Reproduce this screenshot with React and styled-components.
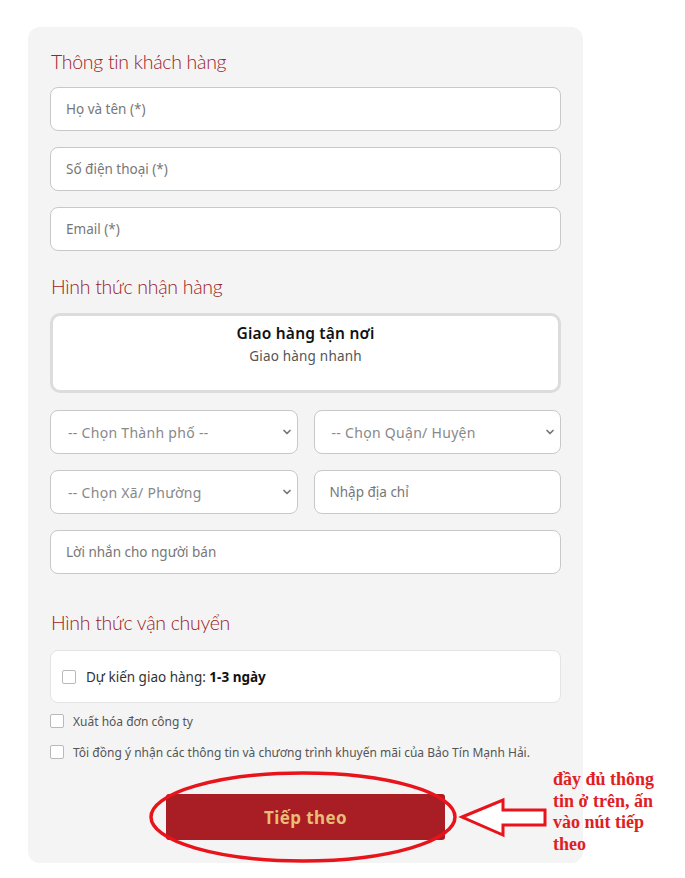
import styled, { createGlobalStyle } from 'styled-components';

const GlobalStyle = createGlobalStyle`
  body {
    margin: 0;
    background: #ffffff;
    font-family: "Noto Sans", "Open Sans", sans-serif;
  }
`;

const Page = styled.div`
  position: relative;
  width: 685px;
  height: 878px;
  padding: 27px 0 0 28px;
  box-sizing: border-box;
`;

const Card = styled.div`
  width: 555px;
  height: 836px;
  box-sizing: border-box;
  background: #f4f4f4;
  border-radius: 12px;
  padding: 23px 22px 23px 22px;
  display: flex;
  flex-direction: column;
`;

const Heading = styled.h2`
  margin: ${(p) => p.$top ?? 0}px 0 ${(p) => p.$bottom ?? 13}px 1px;
  font-family: Lato, sans-serif;
  font-weight: 300;
  font-size: 19.5px;
  line-height: 24px;
  color: #9b2226;
  letter-spacing: -0.3px;
`;

const Stack = styled.div`
  display: flex;
  flex-direction: column;
  gap: 16px;
`;

const Row = styled.div`
  display: grid;
  grid-template-columns: 1fr 1fr;
  gap: 16px;
`;

const Field = styled.input`
  height: 44px;
  box-sizing: border-box;
  border: 1px solid #c8c8c8;
  border-radius: 8px;
  background: #fff;
  padding: 0 15px;
  font-family: inherit;
  font-size: 13.5px;
  color: #333;
  outline: none;
  width: 100%;

  &::placeholder {
    color: #777;
  }
`;

const SelectBox = styled.div`
  height: 44px;
  box-sizing: border-box;
  border: 1px solid #c8c8c8;
  border-radius: 8px;
  background: #fff;
  padding: 0 4px 0 17px;
  display: flex;
  align-items: center;
  justify-content: space-between;
  font-size: 14px;
  letter-spacing: 0.3px;
  color: #888;
`;

const Option = styled.div`
  margin-top: 14px;
  height: 80px;
  box-sizing: border-box;
  border: 3px solid #dcdcdc;
  border-radius: 10px;
  background: #fff;
  display: flex;
  flex-direction: column;
  align-items: center;
  padding-top: 6px;
  margin-bottom: 17px;
`;

const OptionTitle = styled.div`
  font-size: 15.5px;
  font-weight: 600;
  color: #111;
  line-height: 22px;
  letter-spacing: 0.2px;
`;

const OptionSub = styled.div`
  font-size: 13.5px;
  color: #555;
  line-height: 20px;
  margin-top: 2px;
  letter-spacing: 0.2px;
`;

const Ship = styled.div`
  height: 53px;
  box-sizing: border-box;
  border: 1px solid #e4e4e4;
  border-radius: 8px;
  background: #fff;
  display: flex;
  align-items: center;
  padding: 0 11px;
  gap: 10px;
  font-size: 13.5px;
  color: #333;

  b {
    color: #111;
    font-weight: 700;
  }
`;

const Box = styled.span`
  width: 14px;
  height: 14px;
  box-sizing: border-box;
  border: 1px solid #b9b9b9;
  border-radius: 2px;
  background: #fff;
  flex: none;
`;

const Check = styled.label`
  display: flex;
  align-items: center;
  gap: 9px;
  font-size: 12px;
  color: #555;
  margin-top: ${(p) => p.$top}px;
  height: 14px;
`;

const Submit = styled.button`
  align-self: center;
  margin-top: 35px;
  width: 279px;
  height: 46px;
  border: none;
  border-radius: 3px;
  background: #a81e24;
  color: #e9bd78;
  font-family: inherit;
  font-size: 17px;
  font-weight: 700;
  letter-spacing: 0.4px;
  cursor: pointer;
`;

const Marks = styled.svg`
  position: absolute;
  left: 0;
  top: 0;
  pointer-events: none;
`;

const Note = styled.div`
  position: absolute;
  left: 553px;
  top: 769px;
  font-family: "Liberation Serif", serif;
  font-weight: 700;
  font-size: 18px;
  line-height: 21.5px;
  color: #e0201f;
`;

const Chevron = () => (
  <svg width="12" height="12" viewBox="0 0 24 24" fill="none" stroke="#777" strokeWidth="3.5" strokeLinecap="round" strokeLinejoin="round">
    <path d="M6 9l6 6 6-6" />
  </svg>
);

const App = () => (
  <Page>
    <GlobalStyle />
    <Card>
      <Heading>Thông tin khách hàng</Heading>
      <Stack>
        <Field placeholder="Họ và tên (*)" />
        <Field placeholder="Số điện thoại (*)" />
        <Field placeholder="Email (*)" />
      </Stack>

      <Heading $top={24} $bottom={0}>Hình thức nhận hàng</Heading>
      <Option>
        <OptionTitle>Giao hàng tận nơi</OptionTitle>
        <OptionSub>Giao hàng nhanh</OptionSub>
      </Option>
      <Stack>
        <Row>
          <SelectBox>-- Chọn Thành phố --<Chevron /></SelectBox>
          <SelectBox>-- Chọn Quận/ Huyện<Chevron /></SelectBox>
        </Row>
        <Row>
          <SelectBox>-- Chọn Xã/ Phường<Chevron /></SelectBox>
          <Field placeholder="Nhập địa chỉ" />
        </Row>
        <Field placeholder="Lời nhắn cho người bán" />
      </Stack>

      <Heading $top={37} $bottom={15}>Hình thức vận chuyển</Heading>
      <Ship>
        <Box />
        <span>Dự kiến giao hàng: <b>1-3 ngày</b></span>
      </Ship>
      <Check $top={11}><Box />Xuất hóa đơn công ty</Check>
      <Check $top={17}><Box />Tôi đồng ý nhận các thông tin và chương trình khuyến mãi của Bảo Tín Mạnh Hải.</Check>
      <Submit>Tiếp theo</Submit>
    </Card>

    <Marks width="685" height="878">
      <ellipse cx="303" cy="817" rx="152" ry="44" fill="none" stroke="#e8141b" strokeWidth="3.5" />
      <path d="M462 817 L503 800 L503 810 L545 810 L545 825 L503 825 L503 835 Z" fill="#fff" stroke="#e8141b" strokeWidth="3" strokeLinejoin="miter" />
    </Marks>
    <Note>
      đầy đủ thông<br />
      tin ở trên, ấn<br />
      vào nút tiếp<br />
      theo
    </Note>
  </Page>
);

export default App;
